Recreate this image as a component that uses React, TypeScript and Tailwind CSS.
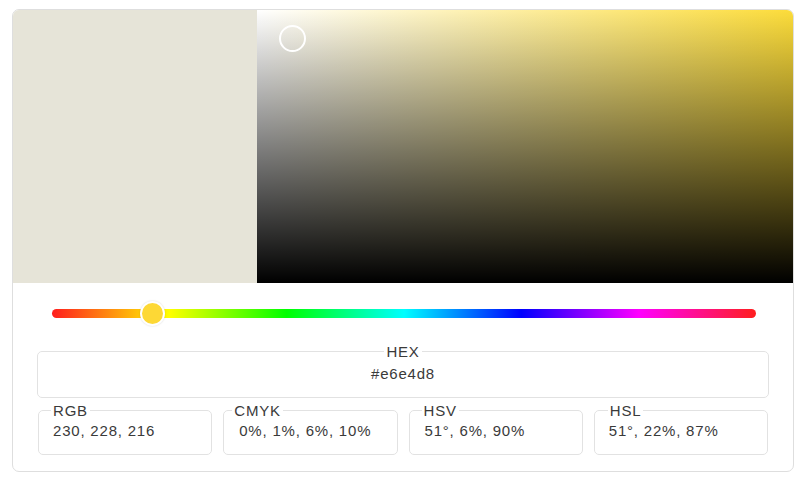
import React from "react";

const hueGradient =
  "linear-gradient(to right, #ff1e1e 0%, #ffff00 16.66%, #00ff00 33.33%, #00ffff 50%, #0000ff 66.66%, #ff00ff 83.33%, #ff1e1e 100%)";

function Field({
  label,
  value,
  legendClass,
  valueClass,
}: {
  label: string;
  value: string;
  legendClass: string;
  valueClass: string;
}) {
  return (
    <fieldset className="m-0 min-w-0 border border-[#e2e2e2] rounded-[5px] p-0 pb-[14px]">
      <legend className={`px-[2px] text-[15px] leading-[17px] tracking-[0.8px] ${legendClass}`}>{label}</legend>
      <div className={`mt-[3px] text-[15px] leading-[18px] tracking-[0.8px] whitespace-pre ${valueClass}`}>{value}</div>
    </fieldset>
  );
}

export default function App() {
  return (
    <div
      className="w-[801px] h-[481px] bg-white pt-[9px] pl-[12px] text-[#3a3a3a]"
      style={{ fontFamily: '"Liberation Sans", Arial, sans-serif' }}
    >
      <div className="w-[782px] border border-[#dedede] rounded-[7px] overflow-hidden bg-white pb-[16px]">
        <div className="flex h-[273px]">
          <div className="w-[244px] bg-[#e6e4d8]" />
          <div
            className="relative flex-1"
            style={{
              background:
                "linear-gradient(to top, #000 0%, rgba(0,0,0,0) 100%), linear-gradient(to right, #fff 0%, #fcdc3a 100%)",
            }}
          >
            <div className="absolute left-[22px] top-[15px] w-[27px] h-[27px] rounded-full border-2 border-white" />
          </div>
        </div>

        <div className="h-[60px] flex items-center pl-[39px] pr-[37px] pt-[1px]">
          <div className="relative w-[704px] h-[9px] rounded-full" style={{ background: hueGradient }}>
            <div className="absolute left-[88px] top-[-8px] w-[25px] h-[25px] rounded-full bg-[#fdd835] border-2 border-white shadow-[0_0_2px_rgba(0,0,0,0.15)]" />
          </div>
        </div>

        <div className="px-[24px]">
          <fieldset className="m-0 min-w-0 border border-[#e2e2e2] rounded-[5px] p-0 pb-[14px] text-center">
            <legend className="mx-auto px-[2px] text-[15px] leading-[17px] tracking-[0.8px]">HEX</legend>
            <div className="mt-[5px] text-[15px] leading-[18px] tracking-[0.8px]">#e6e4d8</div>
          </fieldset>

          <div className="mt-[4px] mx-[1px] grid grid-cols-4 gap-x-[11px]">
            <Field label="RGB" value="230, 228, 216" legendClass="ml-[12px]" valueClass="pl-[14px]" />
            <Field label="CMYK" value=" 0%, 1%, 6%, 10%" legendClass="ml-[8px]" valueClass="pl-[10px]" />
            <Field label="HSV" value="51°, 6%, 90%" legendClass="ml-[12px]" valueClass="pl-[15px]" />
            <Field label="HSL" value="51°, 22%, 87%" legendClass="ml-[13px]" valueClass="pl-[14px]" />
          </div>
        </div>
      </div>
    </div>
  );
}
